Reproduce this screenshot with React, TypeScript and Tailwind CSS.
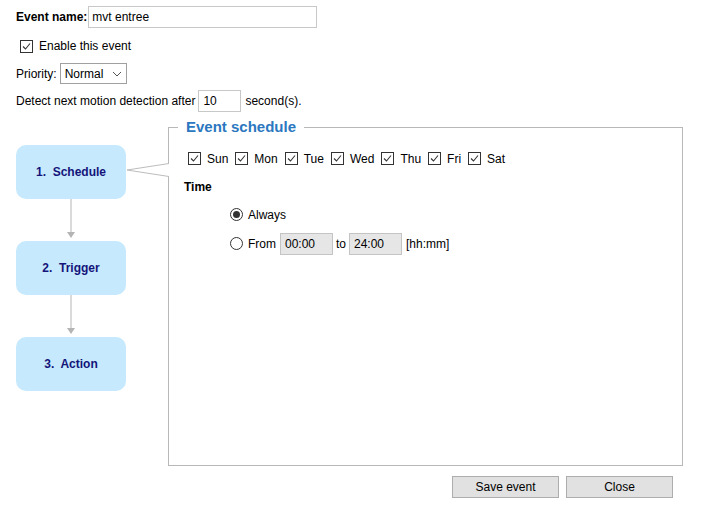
import React from 'react';

const days = ['Sun', 'Mon', 'Tue', 'Wed', 'Thu', 'Fri', 'Sat'];
const steps = ['1.  Schedule', '2.  Trigger', '3.  Action'];

// Windows-style checkbox, drawn so it looks the same in any browser
const CheckBox = () => (
  <span className="inline-flex h-[13px] w-[13px] shrink-0 items-center justify-center border border-[#333] bg-white">
    <svg width="11" height="11" viewBox="0 0 11 11">
      <path d="M2 5.5 L4.5 8 L9 2.5" fill="none" stroke="#333" strokeWidth="1.1" />
    </svg>
  </span>
);

const Radio = ({ checked }: { checked?: boolean }) => (
  <span className="inline-flex h-[13px] w-[13px] shrink-0 items-center justify-center rounded-full border border-[#333] bg-white">
    {checked && <span className="h-[7px] w-[7px] rounded-full bg-[#333]" />}
  </span>
);

const Arrow = () => (
  <div className="flex h-[42px] w-full justify-center">
    <svg width="12" height="42" viewBox="0 0 12 42">
      <line x1="6" y1="0" x2="6" y2="37" stroke="#b4b4b4" strokeWidth="1" />
      <path d="M2 33 L6 39 L10 33 Z" fill="#b4b4b4" />
    </svg>
  </div>
);

export default function App() {
  return (
    <div className="h-[514px] w-[701px] bg-white text-[12px] text-black" style={{ fontFamily: '"Liberation Sans", Arial, sans-serif' }}>
      <div className="pl-4 pt-[6px]">
        {/* Event name */}
        <div className="flex items-center">
          <span className="font-bold">Event name:</span>
          <div className="ml-[1px] flex h-[22px] w-[229px] items-center border border-[#c8c8c8] px-[3px]">mvt entree</div>
        </div>

        {/* Enable */}
        <div className="mt-[9px] flex items-center pl-1">
          <CheckBox />
          <span className="ml-[6px]">Enable this event</span>
        </div>

        {/* Priority */}
        <div className="mt-[8px] flex items-center">
          <span>Priority:</span>
          <div className="ml-[3px] flex h-[21px] w-[67px] items-center justify-between border border-[#a0a0a0] pl-[4px] pr-[4px]">
            <span>Normal</span>
            <svg width="10" height="6" viewBox="0 0 10 6">
              <path d="M1 1 L5 5 L9 1" fill="none" stroke="#555" strokeWidth="1" />
            </svg>
          </div>
        </div>

        {/* Detect */}
        <div className="mt-[6px] flex items-center">
          <span>Detect next motion detection after</span>
          <div className="ml-[3px] flex h-[22px] w-[43px] items-center border border-[#c8c8c8] px-[4px]">10</div>
          <span className="ml-[4px]">second(s).</span>
        </div>
      </div>

      {/* Steps + schedule */}
      <div className="relative mt-[4px] flex pl-4">
        <div className="mt-[29px] flex w-[110px] flex-col">
          {steps.map((s, i) => (
            <React.Fragment key={s}>
              <div className="flex h-[54px] items-center justify-center whitespace-pre rounded-[10px] bg-[#c6e9fd] font-bold text-[#14147a]">
                {s}
              </div>
              {i < steps.length - 1 && <Arrow />}
            </React.Fragment>
          ))}
        </div>

        <fieldset className="ml-[42px] h-[350px] w-[515px] border border-[#b8b8b8] px-[9px]">
          <legend className="px-2 text-[15px] font-bold text-[#2b77c0]">Event schedule</legend>
          <div className="mt-[11px] flex items-center pl-[10px]">
            {days.map(d => (
              <div key={d} className="mr-[7px] flex items-center">
                <CheckBox />
                <span className="ml-[6px]">{d}</span>
              </div>
            ))}
          </div>
          <div className="mt-[10px] pl-[6px] font-bold">Time</div>
          <div className="mt-[10px] flex items-center pl-[52px]">
            <Radio checked />
            <span className="ml-[5px]">Always</span>
          </div>
          <div className="mt-[9px] flex items-center pl-[52px]">
            <Radio />
            <span className="ml-[5px]">From</span>
            <div className="ml-[4px] flex h-[22px] w-[53px] items-center border border-[#c4c4c4] bg-[#e6e6e6] px-[4px]">00:00</div>
            <span className="ml-[3px]">to</span>
            <div className="ml-[3px] flex h-[22px] w-[53px] items-center border border-[#c4c4c4] bg-[#e6e6e6] px-[4px]">24:00</div>
            <span className="ml-[4px]">[hh:mm]</span>
          </div>
        </fieldset>

        {/* callout from the active step to the panel */}
        <svg className="absolute left-[126px] top-[46px]" width="44" height="16" viewBox="0 0 44 16">
          <path d="M1 8 L43 1.5 L43 14.5 Z" fill="#fff" />
          <path d="M1 8 L43 1.5 M1 8 L43 14.5" fill="none" stroke="#bdbdbd" strokeWidth="1" />
        </svg>
      </div>

      <div className="mt-[10px] flex justify-end gap-[7px] pr-[28px]">
        <button className="h-[22px] w-[107px] border border-[#adadad] bg-[#e1e1e1]">Save event</button>
        <button className="h-[22px] w-[107px] border border-[#adadad] bg-[#e1e1e1]">Close</button>
      </div>
    </div>
  );
}
